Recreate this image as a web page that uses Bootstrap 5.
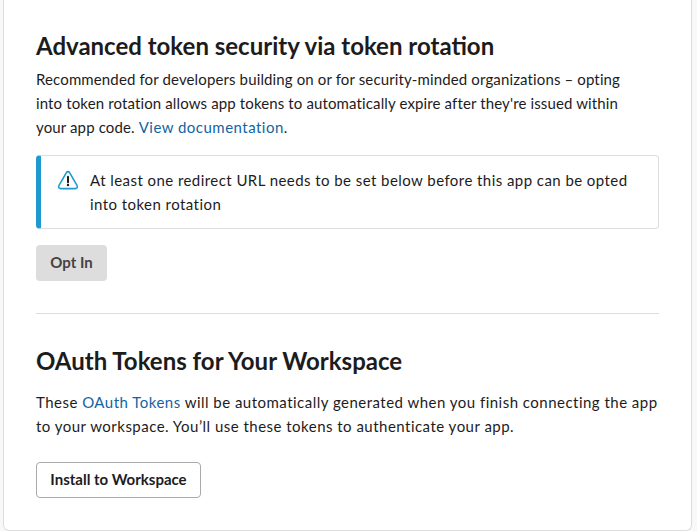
<!DOCTYPE html>
<html lang="en">

<head>
  <meta charset="UTF-8">
  <meta name="viewport" content="width=device-width, initial-scale=1.0" />
  <title>OAuth Tokens</title>
  <link href="https://cdn.jsdelivr.net/npm/bootstrap@5.3.0/dist/css/bootstrap.min.css" rel="stylesheet">
  <style>
    body {
      background: #f8f8f8;
      font-family: Lato, "Liberation Sans", sans-serif;
      color: #1d1c1d;
      font-size: 15px;
      line-height: 24px;
      height: 531px;
      overflow: hidden;
    }

    .app-panel {
      width: 689px;
      height: 531px;
      margin-left: 3px;
      background: #fff;
      border: 1px solid #ddd;
      border-top: 0;
      border-radius: 0 0 6px 6px;
      padding: 29px 32px 0;
    }

    .panel-title {
      font-family: Lato, sans-serif;
      font-size: 24px;
      font-weight: 700;
      line-height: 34px;
      margin: 0 0 4px;
      color: #1d1c1d;
    }

    .panel-text {
      margin: 0;
      letter-spacing: .13px;
      max-width: 612px;
    }

    .panel-text a {
      color: #1264a3;
      text-decoration: none;
      letter-spacing: .48px;
    }

    .notice-box {
      margin-top: 16px;
      height: 74px;
      border: 1px solid #ddd;
      border-left: 5px solid #1d9bd1;
      border-radius: 4px;
      padding: 12px 20px 0 16px;
      gap: 11px;
      letter-spacing: .44px;
    }

    .notice-box svg {
      flex: none;
      margin-top: 2px;
    }

    .btn.btn-optin {
      margin-top: 16px;
      display: block;
      width: 71px;
      height: 36px;
      padding: 0 0 2px;
      background: #ddd;
      border: 0;
      border-radius: 4px;
      color: #454245;
      font-size: 15px;
      font-weight: 700;
      line-height: 34px;
      opacity: 1;
    }

    .panel-rule {
      margin: 32px 0 30px;
      border: 0;
      border-top: 1px solid #ddd;
      opacity: 1;
    }

    .panel-text.second-text {
      margin-top: 12px;
      letter-spacing: .48px;
      max-width: none;
    }

    .btn.btn-install {
      margin-top: 24px;
      display: block;
      width: 165px;
      height: 36px;
      padding: 0 0 2px;
      background: #fff;
      border: 1px solid #aaa;
      border-radius: 4px;
      color: #1d1c1d;
      font-size: 15px;
      font-weight: 700;
      line-height: 32px;
    }
  </style>
</head>

<body>
  <div class="app-panel">
    <h2 class="panel-title">Advanced token security via token rotation</h2>
    <p class="panel-text">Recommended for developers building on or for security-minded organizations – opting into token rotation allows app tokens to automatically expire after they're issued within your app code. <a href="#">View documentation</a>.</p>

    <div class="notice-box d-flex">
      <svg width="22" height="20" viewBox="0 0 22 20" fill="none">
        <path d="M9.4 2.6 1.9 15.6c-.8 1.3.2 3 1.7 3h14.8c1.5 0 2.5-1.7 1.7-3L12.6 2.6c-.7-1.3-2.5-1.3-3.2 0Z" stroke="#1d9bd1" stroke-width="1.6" stroke-linejoin="round"/>
        <path d="M11 6.8v5.4" stroke="#1d1c1d" stroke-width="2" stroke-linecap="round"/>
        <circle cx="11" cy="15" r="1.2" fill="#1d1c1d"/>
      </svg>
      <div>At least one redirect URL needs to be set below before this app can be opted into token rotation</div>
    </div>

    <button class="btn btn-optin" disabled>Opt In</button>

    <hr class="panel-rule">

    <h2 class="panel-title">OAuth Tokens for Your Workspace</h2>
    <p class="panel-text second-text">These <a href="#">OAuth Tokens</a> will be automatically generated when you finish connecting the app to your workspace. You’ll use these tokens to authenticate your app.</p>

    <button class="btn btn-install">Install to Workspace</button>
  </div>

  <script src="https://cdn.jsdelivr.net/npm/bootstrap@5.3.0/dist/js/bootstrap.bundle.min.js"></script>
</body>

</html>
